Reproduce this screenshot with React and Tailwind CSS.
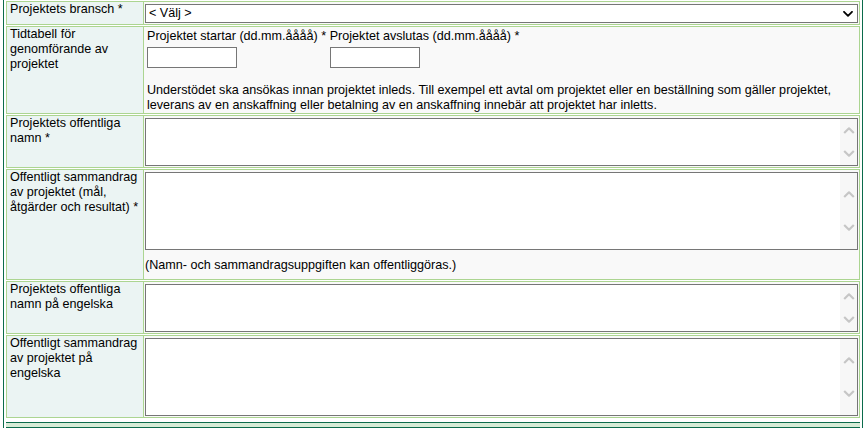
import { useState } from 'react'

const FONT = { fontFamily: '"Liberation Sans", Arial, sans-serif' }

function Chevron({ up, className, width = 1.6 }) {
  return (
    <svg width="10" height="6" viewBox="0 0 10 6" className={className} fill="none">
      <path
        d={up ? 'M1 5.2 5 1.2 9 5.2' : 'M1 0.8 5 4.8 9 0.8'}
        stroke="currentColor"
        strokeWidth={width}
        strokeLinecap="round"
        strokeLinejoin="round"
      />
    </svg>
  )
}

function ScrollArrow({ up }) {
  return (
    <svg width="12" height="7" viewBox="0 0 12 7" fill="none">
      <path
        d={up ? 'M1.2 6 6 1.3 10.8 6' : 'M1.2 1 6 5.7 10.8 1'}
        stroke="currentColor"
        strokeWidth="2.2"
        strokeLinejoin="round"
      />
    </svg>
  )
}

function TextBox({ tall }) {
  const [value, setValue] = useState('')
  return (
    <div className={`flex border border-[#767676] bg-white ${tall ? 'h-[78px]' : 'h-[48px]'}`}>
      <textarea
        value={value}
        onChange={(e) => setValue(e.target.value)}
        className="flex-1 resize-none bg-transparent px-[2px] py-px text-[12.6px] outline-none"
        style={FONT}
      />
      <div
        className={`flex w-[17px] flex-col items-center justify-between bg-[#f7f7f7] text-[#c6c6c6] ${
          tall ? 'py-[18px]' : 'py-[8px]'
        }`}
      >
        <ScrollArrow up />
        <ScrollArrow />
      </div>
    </div>
  )
}

function Label({ children }) {
  return (
    <div className="border border-r-0 border-[#acd591] bg-[#ebf4f3] pl-[3px] leading-[15px]">
      {children}
    </div>
  )
}

function Value({ className = '', children }) {
  return (
    <div className={`border border-[#acd591] bg-[#f9f9f9] px-px ${className}`}>{children}</div>
  )
}

export default function App() {
  return (
    <div className="min-h-[428px] bg-white text-[12.6px] text-black" style={FONT}>
      <div className="ml-[3px] w-[860px] border-x border-b border-[#0b6b4b] px-[2px]">
        <div className="grid grid-cols-[137px_1fr] gap-y-px pt-px">
          <Label>Projektets bransch *</Label>
          <Value className="pt-[2px] pb-px">
            <div className="flex h-[19px] items-center border border-[#767676] bg-white pr-[4px]">
              <select
                className="h-full flex-1 appearance-none bg-transparent pl-[3px] text-[12.6px] leading-[15px] outline-none"
                style={FONT}
                defaultValue=""
              >
                <option value="">&lt; Välj &gt;</option>
              </select>
              <Chevron className="text-black" width={1.8} />
            </div>
          </Value>

          <Label>Tidtabell för genomförande av projektet</Label>
          <Value className="pl-[3px] pt-[2px] leading-[15px]">
            <div className="flex gap-[3.5px]">
              <div>
                <div>Projektet startar (dd.mm.åååå) *</div>
                <input className="mt-[3px] block h-[21px] w-[90px] border border-[#767676] bg-white px-[2px] outline-none" />
              </div>
              <div>
                <div>Projektet avslutas (dd.mm.åååå) *</div>
                <input className="mt-[3px] block h-[21px] w-[90px] border border-[#767676] bg-white px-[2px] outline-none" />
              </div>
            </div>
            <p className="mt-[15px]">
              Understödet ska ansökas innan projektet inleds. Till exempel ett avtal om projektet eller en
              beställning som gäller projektet, leverans av en anskaffning eller betalning av en anskaffning
              innebär att projektet har inletts.
            </p>
          </Value>

          <Label>Projektets offentliga namn *</Label>
          <Value className="pt-[2px] pb-px">
            <TextBox />
          </Value>

          <Label>Offentligt sammandrag av projektet (mål, åtgärder och resultat) *</Label>
          <Value className="pt-[2px] pb-[6px]">
            <TextBox tall />
            <p className="mt-[8px] leading-[15px]">(Namn- och sammandragsuppgiften kan offentliggöras.)</p>
          </Value>

          <Label>Projektets offentliga namn på engelska</Label>
          <Value className="pt-[2px] pb-px">
            <TextBox />
          </Value>

          <Label>Offentligt sammandrag av projektet på engelska</Label>
          <Value className="pt-[2px] pb-px">
            <TextBox tall />
          </Value>
        </div>
        <div className="mt-[4px] h-[12px] border-t border-[#0b6b4b] bg-[#d6ecd6]">
          <div className="mt-[4px] border-t border-[#0b6b4b]" />
        </div>
      </div>
    </div>
  )
}
